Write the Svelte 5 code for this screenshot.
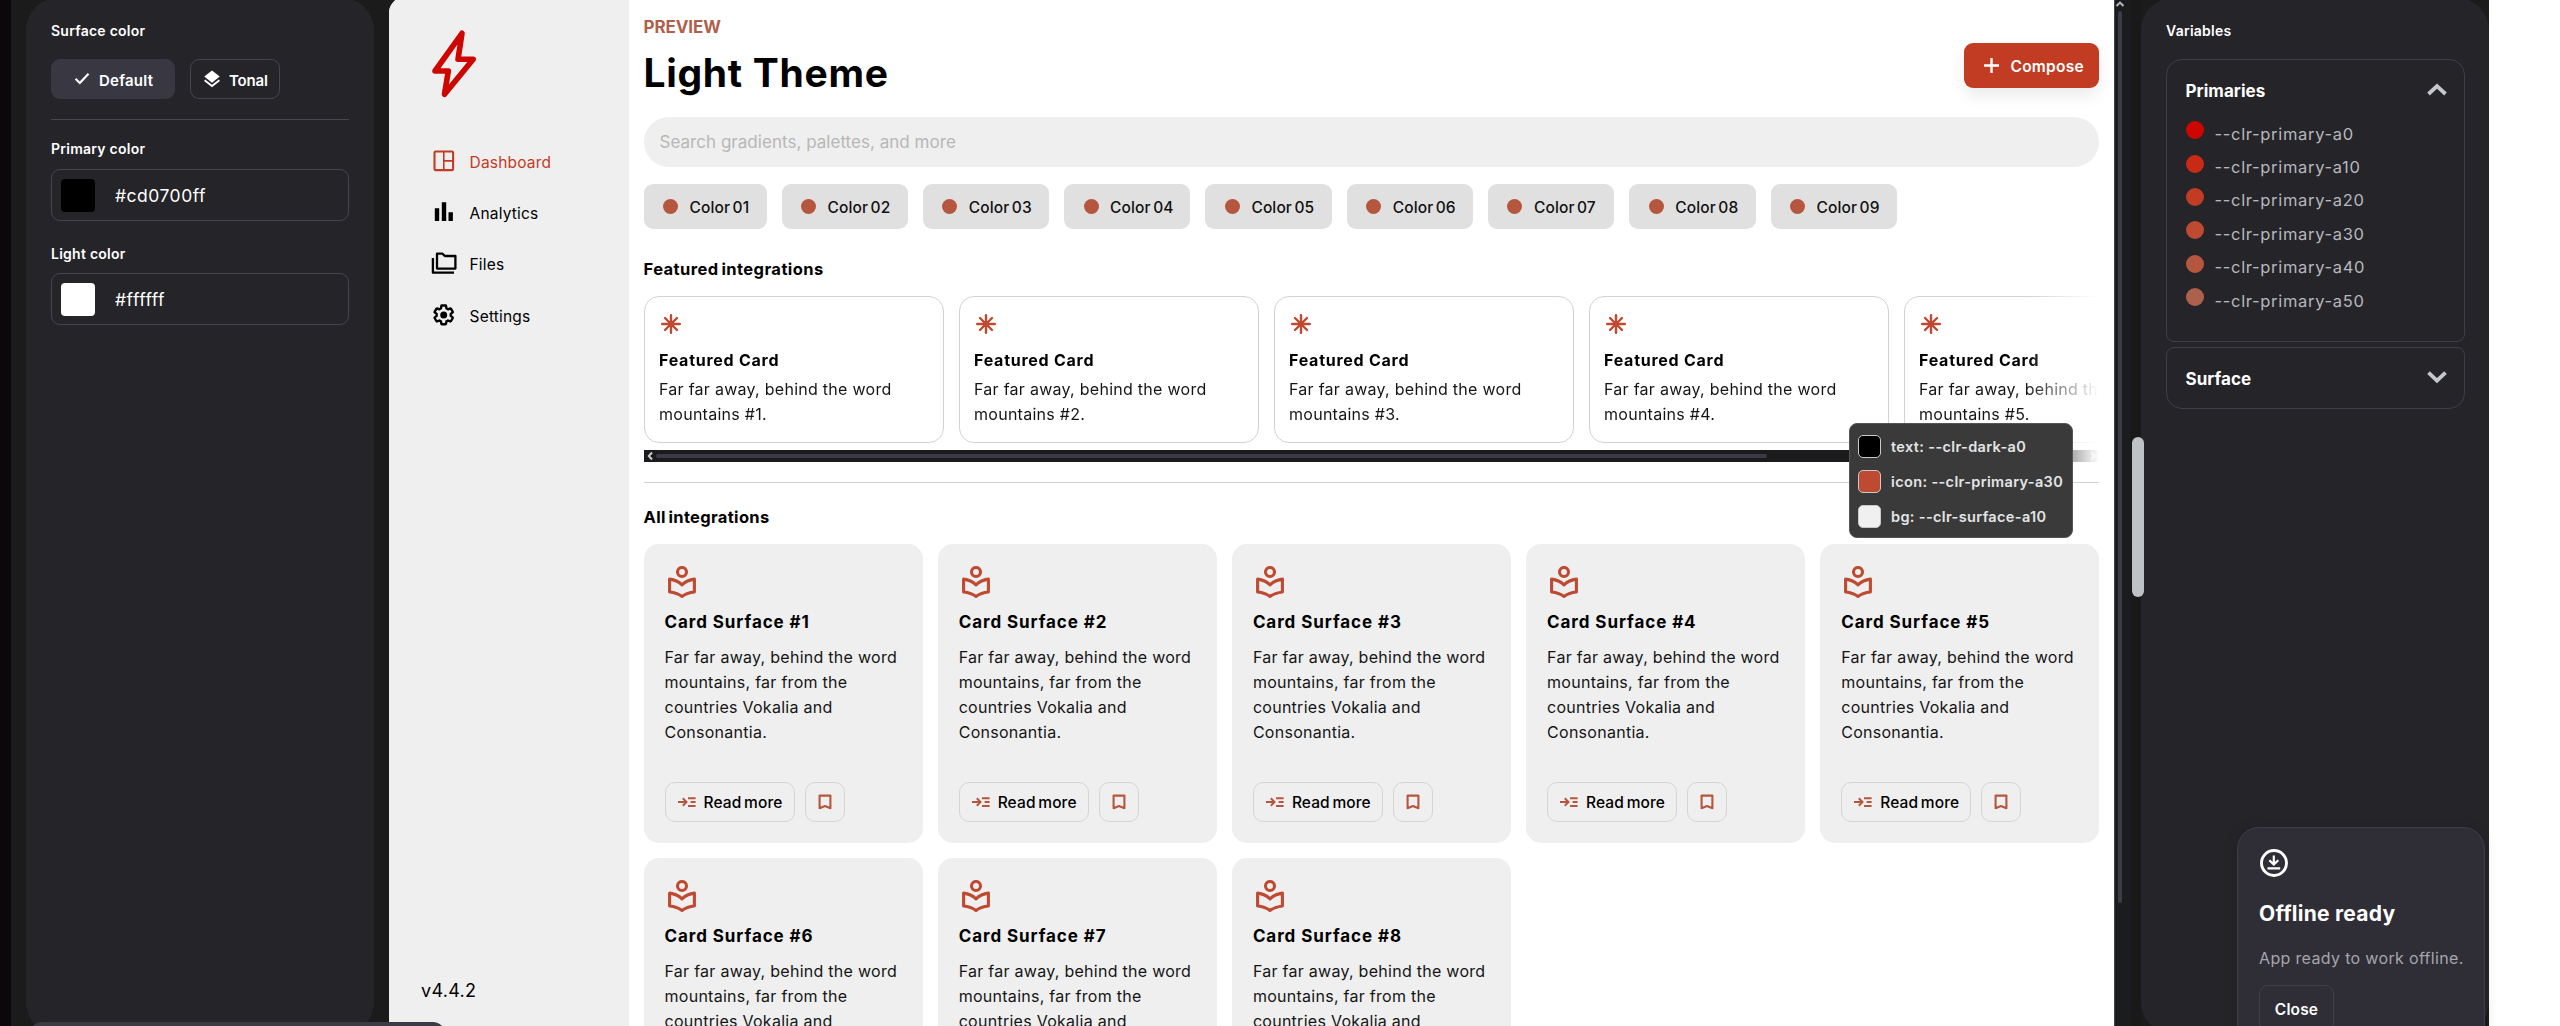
<script>
  const nav = ['Dashboard', 'Analytics', 'Files', 'Settings'];
  const chips = ['01', '02', '03', '04', '05', '06', '07', '08', '09'];
  const featured = [1, 2, 3, 4, 5];
  const cards = [1, 2, 3, 4, 5, 6, 7, 8];
  const primaries = [
    ['a0', '#cd0700'],
    ['a10', '#c82a15'],
    ['a20', '#c23c23'],
    ['a30', '#bd4a31'],
    ['a40', '#b5573f'],
    ['a50', '#ad614d'],
  ];
  const tips = [
    ['text: --clr-dark-a0', '#000000'],
    ['icon: --clr-primary-a30', '#bd4a31'],
    ['bg: --clr-surface-a10', '#f0f0f0'],
  ];
</script>

<div class="page">
  <div class="edge"></div>
  <div class="app">
    <section class="panel left">
      <h3 class="label">Surface color</h3>
      <div class="modes">
        <button class="mode active">
          <svg width="16" height="14" viewBox="0 0 16 14" fill="none" stroke="#fff" stroke-width="2.2"><path d="M1.5 6.8 5.8 11 14.5 1.8" /></svg>
          Default
        </button>
        <button class="mode outline">
          <svg width="18" height="18" viewBox="0 0 18 18"><path d="M9 .5 16.7 6.6 9 12.7 1.3 6.6Z" fill="#fff" /><path d="M1.6 10.2 9 16 16.4 10.2" fill="none" stroke="#fff" stroke-width="1.8" /></svg>
          Tonal
        </button>
      </div>
      <div class="rule"></div>
      <h3 class="label primary">Primary color</h3>
      <div class="field"><span class="swatch black"></span>#cd0700ff</div>
      <h3 class="label light">Light color</h3>
      <div class="field"><span class="swatch white"></span>#ffffff</div>
    </section>

    <div class="preview">
      <aside>
        <svg class="logo" width="48" height="72" viewBox="0 0 48 72" fill="none" stroke="#cd0700" stroke-width="5.6" stroke-linejoin="round"><path d="M32 5.3 28 31.3H43.2L14.5 66.3 18.3 43H5Z" /></svg>
        <nav>
          {#each nav as item}
            <a class:current={item === 'Dashboard'}>
              <svg width="26" height="26" viewBox="0 0 26 26" fill="none" stroke="currentColor">
                {#if item === 'Dashboard'}
                  <rect x="3.5" y="3.5" width="18.6" height="18.6" rx="1.2" stroke-width="2.1" />
                  <path d="M12.8 4V22M12.8 12.9H22" stroke-width="1.6" />
                {:else if item === 'Analytics'}
                  <path d="M6 9.3V22M13 3.2V22M19.7 13.3V22" stroke-width="4.4" />
                {:else if item === 'Files'}
                  <path d="M1.9 8V22.7H23M6 3.7H11.5L13.8 6H24.4V18.6H6Z" stroke-width="2.3" stroke-linejoin="round" />
                {:else}
                  <g transform="translate(.7 .9)">
                    <path transform="translate(12 12) scale(.94) translate(-12 -12)" stroke-width="2.5" stroke-linejoin="round" d="M19.43 12.98c.04-.32.07-.64.07-.98 0-.34-.03-.66-.07-.98l2.11-1.65c.19-.15.24-.42.12-.64l-2-3.46c-.09-.16-.26-.25-.44-.25-.06 0-.12.01-.17.03l-2.49 1c-.52-.4-1.08-.73-1.69-.98l-.38-2.65C14.46 2.18 14.25 2 14 2h-4c-.25 0-.46.18-.49.42l-.38 2.65c-.61.25-1.17.59-1.69.98l-2.49-1c-.06-.02-.12-.03-.18-.03-.17 0-.34.09-.43.25l-2 3.46c-.13.22-.07.49.12.64l2.11 1.65c-.04.32-.07.65-.07.98 0 .33.03.66.07.98l-2.11 1.65c-.19.15-.24.42-.12.64l2 3.46c.09.16.26.25.44.25.06 0 .12-.01.17-.03l2.49-1c.52.4 1.08.73 1.69.98l.38 2.65c.03.24.24.42.49.42h4c.25 0 .46-.18.49-.42l.38-2.65c.61-.25 1.17-.59 1.69-.98l2.49 1c.06.02.12.03.18.03.17 0 .34-.09.43-.25l2-3.46c.12-.22.07-.49-.12-.64l-2.11-1.65z" />
                    <circle cx="12" cy="12" r="3.5" fill="currentColor" stroke="none" />
                  </g>
                {/if}
              </svg>
              {item}
            </a>
          {/each}
        </nav>
        <p class="version">v4.4.2</p>
      </aside>

      <main>
        <header>
          <div>
            <p class="eyebrow">PREVIEW</p>
            <h1>Light Theme</h1>
          </div>
          <button class="compose">
            <svg width="17" height="17" viewBox="0 0 17 17" stroke="#fff" stroke-width="2.4"><path d="M8.5 1V16M1 8.5H16" /></svg>
            Compose
          </button>
        </header>
        <div class="search">Search gradients, palettes, and more</div>
        <div class="chips">
          {#each chips as n}
            <span class="chip"><i></i>Color {n}</span>
          {/each}
        </div>

        <h2 class="first">Featured integrations</h2>
        <div class="scroller">
          <div class="track">
            {#each featured as n}
              <article class="feature">
                <svg width="22" height="20" viewBox="0 0 22 20" stroke="#bd4a31" stroke-width="2.4" stroke-linecap="round"><path d="M11 1.2V18.8M2.2 10H19.8M5 4 17 16M17 4 5 16" /></svg>
                <h4>Featured Card</h4>
                <p>Far far away, behind the word<br />mountains #{n}.</p>
              </article>
            {/each}
          </div>
          <div class="hbar">
            <svg width="8" height="10" viewBox="0 0 8 10" fill="none" stroke="#c9ccd0" stroke-width="2"><path d="M6 1.5 2.8 5 6 8.5" /></svg>
            <div class="hthumb"></div>
            <svg class="end" width="8" height="10" viewBox="0 0 8 10" fill="none" stroke="#c9ccd0" stroke-width="2"><path d="M2 1.5 5.2 5 2 8.5" /></svg>
          </div>
        </div>
        <div class="divider"></div>
        <h2 class="second">All integrations</h2>
        <div class="grid">
          {#each cards as n}
            <article class="card">
              <svg width="28" height="33" viewBox="0 0 28 33" fill="none" stroke="#bd4a31" stroke-width="3.1"><circle cx="14" cy="6" r="4.5" /><path d="M1.6 13.1Q9 14 14 18.9 19 14 26.4 13.1V26Q19 26.8 14 30.4 9 26.8 1.6 26Z" stroke-linejoin="round" /></svg>
              <h4>Card Surface #{n}</h4>
              <p>Far far away, behind the word<br />mountains, far from the<br />countries Vokalia and<br />Consonantia.</p>
              <div class="actions">
                <button class="more">
                  <svg width="18" height="12" viewBox="0 0 18 12" fill="none" stroke="#b5573f" stroke-width="2"><path d="M0 6H8M4.8 2.2 8.5 6 4.8 9.8M10 2.2H17.6M12.6 6H17.6M10 9.9H17.6" /></svg>
                  Read more
                </button>
                <button class="mark">
                  <svg width="14" height="16" viewBox="0 0 14 16" fill="none" stroke="#b5573f" stroke-width="2.1"><path d="M1.6 1.6H12.4V14.2L7 12 1.6 14.2Z" stroke-linejoin="round" /></svg>
                </button>
              </div>
            </article>
          {/each}
        </div>
      </main>
    </div>

    <div class="vbar">
      <svg width="10" height="6" viewBox="0 0 10 6" fill="none" stroke="#b9bbc0" stroke-width="2"><path d="M1.5 5 5 1.6 8.5 5" /></svg>
      <div class="vthumb"></div>
    </div>

    <section class="panel right">
      <h3 class="label">Variables</h3>
      <div class="group open">
        <div class="title">Primaries
          <svg width="20" height="13" viewBox="0 0 20 13" fill="none" stroke="#c4c7cb" stroke-width="3.8"><path d="M1.5 11 10 3 18.5 11" /></svg>
        </div>
        {#each primaries as [name, color]}
          <div class="var"><i style="background:{color}"></i>--clr-primary-{name}</div>
        {/each}
      </div>
      <div class="group closed">
        <div class="title">Surface
          <svg width="20" height="13" viewBox="0 0 20 13" fill="none" stroke="#c4c7cb" stroke-width="3.8"><path d="M1.5 1.6 10 9.6 18.5 1.6" /></svg>
        </div>
      </div>
    </section>
  </div>

  <div class="tooltip">
    {#each tips as [text, color]}
      <div><i style="background:{color}"></i>{text}</div>
    {/each}
  </div>
  <div class="pagethumb"></div>
  <div class="statusbar"></div>
  <div class="toast">
    <svg width="30" height="30" viewBox="0 0 30 30" fill="none" stroke="#fff"><circle cx="15" cy="15" r="12.5" stroke-width="2.9" /><path d="M14.8 7.5V15M10.3 12.2 14.8 16.4 19.3 12.2M8.5 20.4H21.2" stroke-width="2.2" /></svg>
    <h4>Offline ready</h4>
    <p>App ready to work offline.</p>
    <button>Close</button>
  </div>
</div>

<style>
  :global(body) { background: #fff; }
  .page { position: relative; display: flex; width: 2560px; height: 1026px; overflow: hidden; font-family: Inter, "Liberation Sans", sans-serif; color: #000; background: #fff; }
  .page * { box-sizing: border-box; }
  h1, h2, h3, h4, p { margin: 0; }
  button { font-family: inherit; padding: 0; margin: 0; border: 0; background: none; display: flex; align-items: center; }
  svg { display: block; flex: none; }
  i { flex: none; display: block; }
  .edge { width: 11px; background: #0c070b; }
  .app { width: 2478px; display: flex; background: #1b1b1c; overflow: hidden; }

  .panel { flex: none; height: 1036px; margin-top: -2px; padding: 23px 25px; border-radius: 32px; background: #252429; color: #fff; }
  .left { width: 348px; margin: -2px 15px 0 15px; }
  .right { width: 348px; padding-right: 24px; }
  .label { font-size: 14px; line-height: 20px; font-weight: 600; letter-spacing: .25px; }
  .modes { display: flex; gap: 15px; margin-top: 18px; }
  .mode { height: 40px; border-radius: 9px; color: #fff; font-size: 15px; font-weight: 600; padding-top: 2px; }
  .active { width: 124px; padding-left: 23px; gap: 9px; letter-spacing: .25px; background: #393741; }
  .outline { width: 90px; padding-left: 12px; gap: 8px; letter-spacing: -.15px; border: 1px solid #46444f; }
  .mode svg { margin-bottom: 3px; }
  .rule { height: 1px; background: #484653; margin: 20px 0 19px; }
  .field { display: flex; align-items: center; height: 52px; margin: 10px 0 23px; padding-left: 9px; border: 1px solid #464454; border-radius: 9px; font-size: 17.5px; letter-spacing: .5px; }
  .light + .field { margin-top: 9px; }
  .swatch { width: 34px; height: 33px; border-radius: 4px; margin-right: 20px; }
  .black { background: #000; }
  .white { background: #fff; }

  .preview { flex: none; display: flex; width: 1725px; height: 1029px; margin-top: -3px; border-radius: 16px 0 0 0; background: #fff; overflow: hidden; }
  aside { flex: none; width: 240px; display: flex; flex-direction: column; background: #efefef; padding: 31px 0 23px 32px; }
  .logo { margin-left: 9px; }
  nav { margin: 37px 0 0 10px; }
  nav a { display: flex; align-items: center; gap: 12.5px; height: 51.2px; font-size: 15.5px; letter-spacing: .2px; }
  nav svg { margin-bottom: 3px; }
  .current { color: #c23c23; }
  .version { margin-top: auto; font-size: 18px; line-height: 24px; letter-spacing: .3px; }

  main { flex: none; width: 1485px; padding: 20px 15px 0 14.5px; }
  header { display: flex; justify-content: space-between; height: 80px; }
  .eyebrow { font-size: 17px; line-height: 20px; font-weight: 700; letter-spacing: -.1px; color: #b0604a; }
  h1 { margin-top: 12px; font-size: 39px; line-height: 47px; font-weight: 700; letter-spacing: .7px; }
  .compose { width: 135px; height: 45px; margin-top: 26px; padding: 2px 0 0 19px; gap: 10.5px; border-radius: 9px; background: #c23c23; color: #fff; font-size: 15.5px; font-weight: 600; letter-spacing: .25px; box-shadow: 0 8px 16px rgba(0, 0, 0, .08); }
  .compose svg { margin-bottom: 3px; }
  .search { height: 50px; margin-top: 20px; padding-left: 16px; line-height: 50px; border-radius: 25px; background: #efefef; color: #b7b7b7; font-size: 17px; letter-spacing: .03px; }
  .chips { display: flex; gap: 15px; margin-top: 17px; }
  .chip { display: flex; align-items: center; width: 126.3px; height: 45px; padding: 2px 0 0 19.5px; border-radius: 9px; background: #e0e0e0; color: #111; font-size: 15.5px; font-weight: 500; letter-spacing: .12px; word-spacing: -1.8px; white-space: pre; }
  .chip:first-child { width: 123px; }
  .chip i { width: 15px; height: 15px; margin: 0 11.5px 2px 0; border-radius: 50%; background: #b5573f; }
  h2 { font-size: 16.5px; line-height: 20px; font-weight: 700; word-spacing: -1.5px; }
  .first { margin: 30px 0 17px; letter-spacing: .43px; }
  .second { margin: 24px 0 17px; letter-spacing: .33px; }
  .scroller { overflow: hidden; mask-image: linear-gradient(to right, #000 95%, transparent); }
  .track { display: flex; gap: 15px; }
  .feature { flex: none; width: 300px; height: 147px; padding: 17px 0 0 14.5px; border: 1px solid #d2d2d2; border-radius: 15px; }
  .feature svg { margin-left: 1px; }
  .feature h4 { margin-top: 14px; font-size: 16px; line-height: 24px; letter-spacing: .74px; }
  .feature p { margin-top: 5px; }
  .feature p, .card p { font-size: 16px; line-height: 25px; letter-spacing: .27px; color: #151515; white-space: nowrap; }
  .hbar { display: flex; align-items: center; height: 12px; margin-top: 7px; padding: 0 2px; gap: 2px; background: #1b1b1e; }
  .hthumb { width: 1111px; height: 4px; border-radius: 2px; background: #3b3a47; }
  .end { margin-left: auto; }
  .divider { height: 1px; margin-top: 20px; background: #d3d3d3; }
  .grid { display: grid; grid-template-columns: repeat(5, 279px); gap: 15.4px 15.2px; }
  .card { height: 299px; padding: 22px 0 0 21px; border-radius: 15px; background: #efefef; }
  .card > svg { margin-left: 3px; }
  .card h4 { margin-top: 11px; font-size: 17px; line-height: 24px; letter-spacing: .92px; }
  .card p { margin-top: 11px; }
  .actions { display: flex; gap: 10px; margin-top: 37px; }
  .actions button { height: 40px; border: 1px solid #d5d5d5; border-radius: 10px; }
  .more { width: 130px; padding: 1px 0 0 12px; gap: 8px; font-size: 15.5px; font-weight: 500; letter-spacing: .1px; word-spacing: -1.5px; color: #000; }
  .mark { width: 40px; justify-content: center; }
  .more svg { margin-bottom: 1px; }

  .vbar { flex: none; width: 27px; padding-top: 1px; background: linear-gradient(to right, #43474c 1px, #1b1c1e 1px, #1b1c1e 17px, #191919 17px); }
  .vbar svg { margin-left: 1px; }
  .vthumb { width: 4px; height: 892px; margin: 4px 0 0 4px; border-radius: 2px; background: #3e3c48; }

  .group { border: 1px solid #3f3d4b; padding: 0 17px 0 18.5px; }
  .open { height: 283px; margin-top: 18px; padding-top: 19px; border-radius: 16px 16px 8px 8px; }
  .closed { height: 62px; margin-top: 5px; padding-top: 19px; border-radius: 8px 8px 16px 16px; }
  .title { display: flex; align-items: center; justify-content: space-between; height: 24px; font-size: 17px; font-weight: 700; letter-spacing: .05px; }
  .title svg { margin-bottom: 3px; }
  .open .title { margin-bottom: 14px; }
  .var { display: flex; align-items: center; height: 33.4px; font-size: 16.5px; letter-spacing: .68px; color: #b7b8bd; }
  .var i { width: 18px; height: 18px; margin: 0 11px 7px 0; border-radius: 50%; }

  .tooltip { position: absolute; left: 1849px; top: 423px; width: 224px; height: 115px; padding: 11px 0 0 8px; border: 1px solid #555; border-radius: 8px; background: #3a3a3a; }
  .tooltip div { display: flex; align-items: center; height: 23px; margin-bottom: 12px; padding-bottom: 1px; font-size: 14.5px; font-weight: 600; letter-spacing: .36px; color: #e3e5e6; white-space: nowrap; }
  .tooltip i { width: 23px; height: 23px; margin-right: 10px; border: 1.5px solid #c9c9c9; border-radius: 5px; }
  .pagethumb { position: absolute; left: 2132px; top: 437px; width: 12px; height: 160px; border-radius: 6px; background: #bdc2c6; }
  .statusbar { position: absolute; left: 30px; top: 1022px; width: 415px; height: 40px; border-radius: 12px; background: #3c3a45; }
  .toast { position: absolute; left: 2237px; top: 827px; width: 248px; height: 230px; padding: 20px 0 0 21px; border: 1px solid #3f3d4a; border-radius: 22px; background: #2f2d36; color: #fff; box-shadow: 0 0 14px rgba(0, 0, 0, .12); }
  .toast h4 { margin-top: 22px; font-size: 21px; line-height: 28px; letter-spacing: .26px; }
  .toast p { margin-top: 18px; font-size: 16px; line-height: 24px; letter-spacing: .34px; color: #a5a6ab; white-space: nowrap; }
  .toast button { width: 75px; height: 48px; margin-top: 15px; justify-content: center; border: 1px solid #403e4b; border-radius: 9px; color: #fff; font-size: 15.5px; font-weight: 600; letter-spacing: .15px; }
</style>
